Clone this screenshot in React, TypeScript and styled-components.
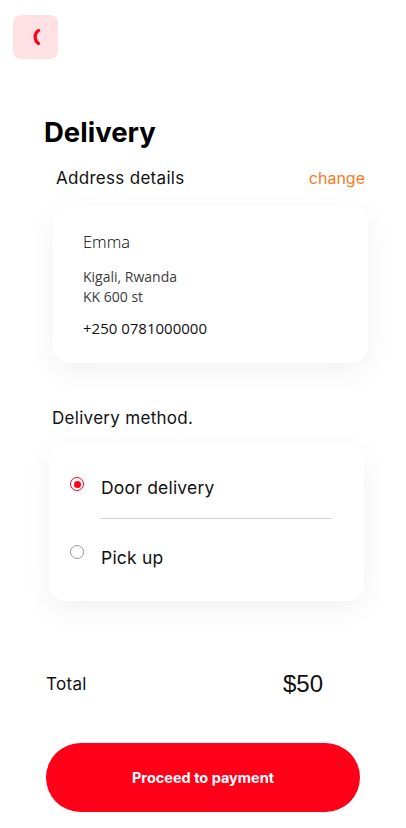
import styled, { createGlobalStyle } from "styled-components"

const GlobalStyle = createGlobalStyle`
    body {
        margin: 0;
        background: #ffffff;
        font-family: "Inter", "Noto Sans", sans-serif;
        color: #111111;
    }
`

const Page = styled.div`
    width: 406px;
    min-height: 828px;
    padding-top: 15px;
    box-sizing: border-box;
    display: flex;
    flex-direction: column;
`

const BackButton = styled.button`
    width: 45px;
    height: 44px;
    margin-left: 13px;
    border: none;
    border-radius: 8px;
    background: #ffe1e5;
    display: flex;
    align-items: center;
    justify-content: center;
    padding: 0;
    cursor: pointer;
`

const Title = styled.h1`
    margin: 57px 0 0 44px;
    font-size: 27.5px;
    line-height: 32px;
    font-weight: 700;
    color: #000000;
`

const SectionHeader = styled.div<{ $left: number; $right?: number; $top: number }>`
    display: flex;
    justify-content: space-between;
    align-items: center;
    margin: ${p => p.$top}px ${p => p.$right ?? 0}px 0 ${p => p.$left}px;
`

const SectionLabel = styled.span`
    font-size: 17px;
    line-height: 22px;
    font-weight: 400;
    letter-spacing: 0.3px;
    color: #111111;
`

const ChangeLink = styled.a`
    font-size: 16px;
    line-height: 22px;
    color: #fa7a1e;
    cursor: pointer;
`

const Card = styled.div<{ $left: number; $top: number }>`
    width: 315px;
    margin: ${p => p.$top}px 0 0 ${p => p.$left}px;
    background: #ffffff;
    border-radius: 16px;
    box-shadow: 0 8px 28px rgba(0, 0, 0, 0.06);
    box-sizing: border-box;
`

const AddressCard = styled(Card)`
    padding: 25px 30px 25px;
    font-family: "Open Sans", "Noto Sans", sans-serif;
`

const Name = styled.div`
    font-size: 16.5px;
    line-height: 22px;
    font-weight: 300;
    color: #000000;
`

const AddressLines = styled.div`
    margin-top: 14px;
    font-size: 14px;
    line-height: 20px;
    font-weight: 400;
    color: #3c3c3c;
`

const Phone = styled.div`
    margin-top: 11px;
    font-size: 15px;
    line-height: 20px;
    color: #111111;
`

const MethodCard = styled(Card)`
    padding: 26px 32px 31px 21px;
    display: flex;
    flex-direction: column;
`

const Option = styled.label<{ $gap?: number }>`
    display: flex;
    align-items: center;
    height: 32px;
    gap: 17px;
    margin-top: ${p => p.$gap ?? 0}px;
    cursor: pointer;
`

const Radio = styled.span<{ $checked?: boolean }>`
    width: 14px;
    height: 14px;
    border-radius: 50%;
    box-sizing: border-box;
    border: 1.5px solid ${p => (p.$checked ? "#ff0019" : "#9a9a9a")};
    display: flex;
    align-items: center;
    justify-content: center;
    flex-shrink: 0;
    margin-top: -4px;

    &::after {
        content: "";
        width: 7px;
        height: 7px;
        border-radius: 50%;
        background: ${p => (p.$checked ? "#ff0019" : "transparent")};
    }
`

const OptionText = styled.span<{ $drop?: number }>`
    font-size: 17.5px;
    line-height: 22px;
    letter-spacing: 0.2px;
    margin-top: ${p => p.$drop ?? 0}px;
    color: #111111;
`

const Divider = styled.hr`
    margin: 16px 0 0 30px;
    border: none;
    border-top: 1px solid #d3d3d3;
    height: 0;
`

const TotalRow = styled.div`
    display: flex;
    justify-content: space-between;
    align-items: center;
    margin: 71px 83px 0 46px;
`

const TotalLabel = styled.span`
    font-size: 17px;
    line-height: 24px;
    letter-spacing: 0.3px;
    color: #111111;
`

const TotalValue = styled.span`
    font-family: "Liberation Sans", Arial, sans-serif;
    font-size: 24px;
    line-height: 24px;
    color: #111111;
`

const PayButton = styled.button`
    width: 314px;
    height: 69px;
    margin: 47px 0 0 46px;
    border: none;
    border-radius: 35px;
    background: #ff0019;
    color: #ffffff;
    font-family: "Inter", "Noto Sans", sans-serif;
    font-size: 14.5px;
    font-weight: 700;
    cursor: pointer;
`

const Chevron = () => (
    <svg width="10" height="16" viewBox="0 0 10 16" fill="none">
        <path d="M7.5 1.5 C3 4.5 3 11.5 7.5 14.5" stroke="#ff0019" strokeWidth="3.2" strokeLinecap="round" />
    </svg>
)

const App = () => {
    return (
        <>
            <GlobalStyle />
            <Page>
                <BackButton aria-label="Back">
                    <Chevron />
                </BackButton>

                <Title>Delivery</Title>

                <SectionHeader $left={56} $right={41} $top={19}>
                    <SectionLabel>Address details</SectionLabel>
                    <ChangeLink>change</ChangeLink>
                </SectionHeader>

                <AddressCard $left={53} $top={17}>
                    <Name>Emma</Name>
                    <AddressLines>
                        Kigali, Rwanda
                        <br />
                        KK 600 st
                    </AddressLines>
                    <Phone>+250 0781000000</Phone>
                </AddressCard>

                <SectionHeader $left={52} $top={44}>
                    <SectionLabel>Delivery method.</SectionLabel>
                </SectionHeader>

                <MethodCard $left={49} $top={15}>
                    <Option>
                        <Radio $checked />
                        <OptionText $drop={4}>Door delivery</OptionText>
                    </Option>
                    <Divider />
                    <Option $gap={19}>
                        <Radio />
                        <OptionText $drop={8}>Pick up</OptionText>
                    </Option>
                </MethodCard>

                <TotalRow>
                    <TotalLabel>Total</TotalLabel>
                    <TotalValue>$50</TotalValue>
                </TotalRow>

                <PayButton>Proceed to payment</PayButton>
            </Page>
        </>
    )
}

export default App
